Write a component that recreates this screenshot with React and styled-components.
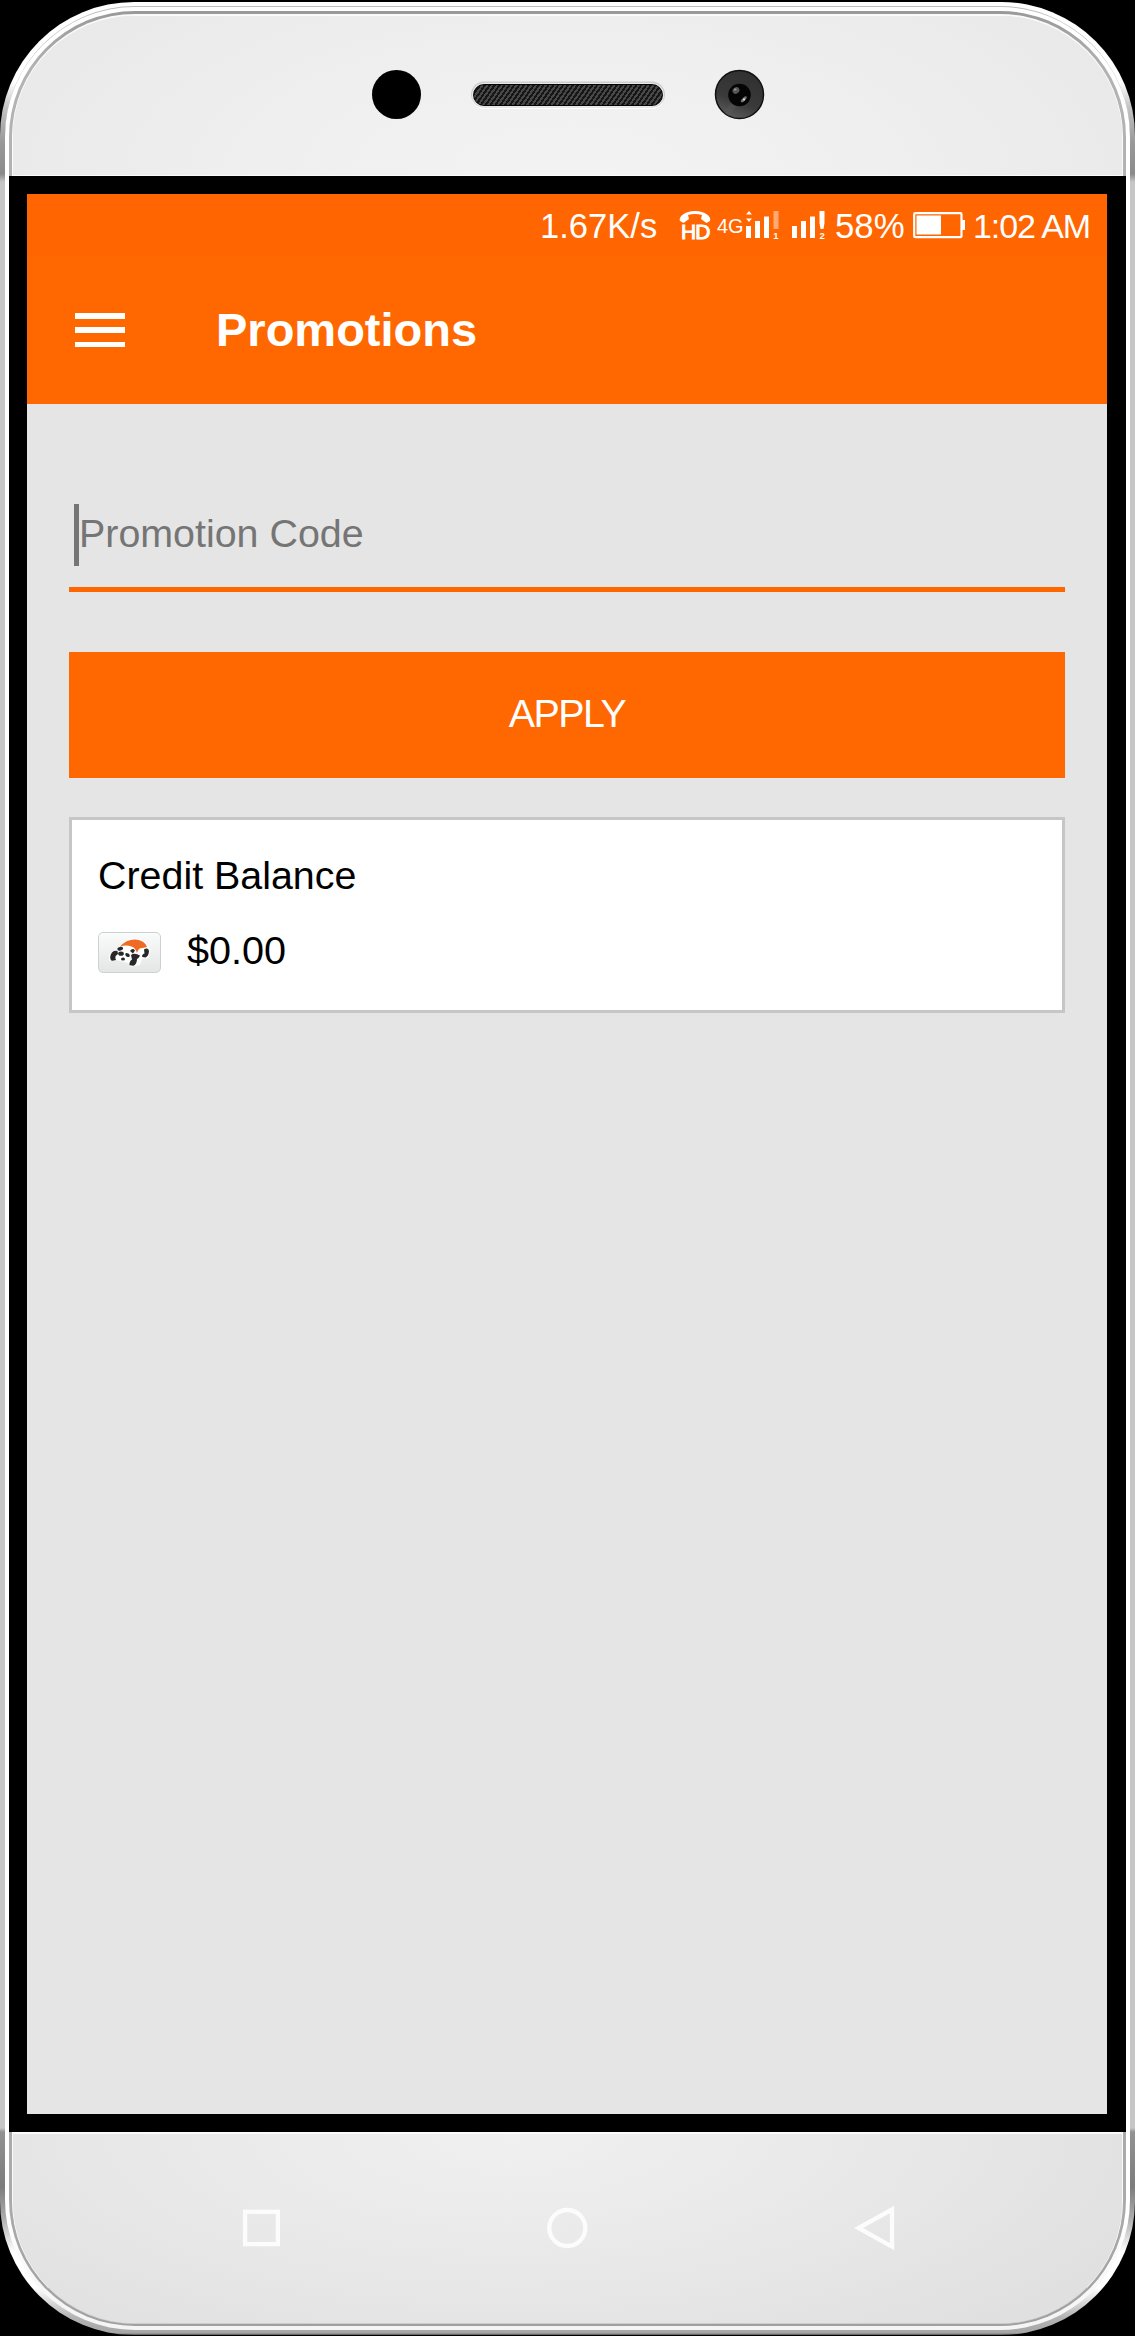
import React from "react";
import styled, { createGlobalStyle, css } from "styled-components";

const GlobalStyle = createGlobalStyle`
  *, *::before, *::after { box-sizing: border-box; }
  html, body { margin: 0; padding: 0; background: #000; }
  body { font-family: "Liberation Sans", Arial, sans-serif; }
  svg { display: block; flex: none; overflow: visible; }
`;

const Stage = styled.main`
  width: 1135px;
  height: 2336px;
  padding: 2px 0 1px;
  background: #000;
  overflow: hidden;
`;

const Rim = styled.div`
  height: 2333px;
  padding: 4px 5px 5px;
  border-radius: 134px;
  background: linear-gradient(
    180deg,
    #fff 0,
    #fff 80px,
    #c4c4c4 105px,
    #999 140px,
    #8a8a8a 172px,
    #c6c6c6 180px,
    #c6c6c6 2126px,
    #929292 2130px,
    #7c7c7c 2185px,
    #aaa 2215px,
    #fff 2250px,
    #fff 2285px,
    #b4b4b4 2315px,
    #a6a6a6 2331px,
    #555 2333px
  );
`;

const Edge = styled.div`
  height: 100%;
  padding: 4px 4px 4px;
  border-top: 1px solid #bdbdbd;
  border-radius: 130px;
  background: linear-gradient(180deg, #fff 0, #fff 2200px, #f4f4f4 100%);
`;

const Groove = styled.div`
  height: 100%;
  padding: 3px 3px 2px;
  border-radius: 126px;
  background: linear-gradient(180deg, #999 0, #b3b3b3 60px, #aaa 2200px, #a0a0a0 100%);
`;

const Face = styled.div`
  height: 100%;
  display: flex;
  flex-direction: column;
  border-radius: 123px;
  border: 1px solid #fafafa;
  border-top-width: 2px;
  border-bottom: 1px solid #ccc;
  background: #e8e8e8;
`;

const TopBezel = styled.header`
  height: 160px;
  flex: none;
  display: flex;
  align-items: center;
  gap: 52px;
  padding: 0 0 2px 358.5px;
  border-bottom: 1px solid #fafafa;
  border-radius: 121px 121px 0 0;
  background: radial-gradient(ellipse 620px 260px at 50% 100%, #f3f3f3 0, #efefef 50%, #e9e9e9 100%);
`;

const Sensor = styled.div`
  width: 49px;
  height: 49px;
  border-radius: 50%;
  background: #000;
`;

const Speaker = styled.div`
  width: 190px;
  height: 22px;
  border-radius: 11px;
  border: 1.5px solid #050505;
  background: repeating-linear-gradient(125deg, #161616 0, #161616 2px, #484848 2px, #484848 4px);
  box-shadow: 0 0 0 1px #e9e9e9, 0 -0.5px 0 2px #cdcdcd, 0 2px 0 1px #fff;
`;

const Screen = styled.section`
  height: 1956px;
  flex: none;
  margin: 0 -4px;
  padding: 18px 19px 18px 18px;
  background: #000;
`;

const AppPage = styled.div`
  height: 100%;
  display: flex;
  flex-direction: column;
  background: #e5e5e5;
`;

const StatusBar = styled.div`
  height: 62px;
  flex: none;
  display: flex;
  align-items: flex-start;
  padding-left: 513px;
  background: #ff6500;
  color: #fff;
`;

const StatusText = styled.span`
  width: ${(p) => p.$width}px;
  flex: none;
  padding-top: ${(p) => p.$top || 12}px;
  font-size: ${(p) => p.$size || 34}px;
  line-height: 40px;
  letter-spacing: ${(p) => p.$spacing || 0}px;
  white-space: nowrap;
`;

const StatusIcons = styled.svg`
  margin-right: ${(p) => p.$gap}px;
`;

const AppBar = styled.div`
  height: 148px;
  flex: none;
  display: flex;
  align-items: flex-start;
  padding: 57px 0 0 48px;
  gap: 91px;
  background: #ff6800;
`;

const MenuButton = styled.button`
  width: 50px;
  height: 34px;
  padding: 0;
  margin: 0;
  border: 0;
  background: none;
  display: flex;
  flex-direction: column;
  justify-content: space-between;
  &::before, &::after { content: ""; height: 5.5px; background: #fff; }
`;

const MenuLine = styled.span`
  height: 5.5px;
  background: #fff;
`;

const Title = styled.h1`
  margin: -11px 0 0;
  font-size: 47px;
  font-weight: 700;
  line-height: 56px;
  color: #fff;
`;

const Content = styled.div`
  display: flex;
  flex-direction: column;
  padding: 100px 42px 0;
`;

const Field = styled.label`
  height: 88px;
  display: flex;
  align-items: flex-start;
  padding-left: 5px;
  border-bottom: 5px solid #ff6600;
`;

const Caret = styled.i`
  width: 5px;
  height: 62px;
  flex: none;
  background: #757575;
`;

const text = css`
  font-size: ${(p) => p.$size || 39.4}px;
  line-height: 48px;
  letter-spacing: ${(p) => p.$spacing || 0}px;
  white-space: nowrap;
`;

const Placeholder = styled.span`
  ${text}
  padding-top: 5px;
  color: #757575;
`;

const ApplyButton = styled.button`
  ${text}
  height: 126px;
  margin: 60px 0 39px;
  padding: 0 0 4px;
  border: 0;
  font-family: inherit;
  color: #fff;
  background: #ff6700;
`;

const Card = styled.section`
  height: 196px;
  padding: 31px 26px 0;
  border: 3px solid #c6c6c6;
  background: #fff;
  color: #000;
`;

const CardTitle = styled.div`
  ${text}
`;

const Balance = styled.div`
  display: flex;
  align-items: center;
  gap: 26px;
  margin-top: 27px;
`;

const Amount = styled.span`
  ${text}
  padding-bottom: 5px;
`;

const Badge = styled.div`
  width: 63px;
  height: 41px;
  border-radius: 5px;
  border: 1px solid #cfd1d1;
  background: linear-gradient(180deg, #fafbfb, #e4e6e5);
`;

const BottomBezel = styled.footer`
  flex: 1;
  display: flex;
  align-items: flex-start;
  padding: 70px 0 0 230px;
  border-top: 2px solid #fbfbfb;
  border-radius: 0 0 121px 121px;
  background: radial-gradient(ellipse 700px 260px at 45% 0, #f0f0f0 0, #e8e8e8 55%, #e0e0e0 100%);
`;

const NavIcon = styled.svg`
  margin-right: ${(p) => p.$gap || 0}px;
  fill: none;
  stroke: #fcfcfc;
  stroke-width: 4.3;
`;

const Camera = () => (
  <svg width="49" height="49" viewBox="0 0 49 49">
    <defs>
      <linearGradient id="lens" x1="0.2" y1="1" x2="0.6" y2="0">
        <stop offset="0" stopColor="#606060" />
        <stop offset="0.4" stopColor="#3a3a3a" />
        <stop offset="1" stopColor="#303030" />
      </linearGradient>
    </defs>
    <circle cx="24.5" cy="24.5" r="24" fill="url(#lens)" stroke="#111" strokeWidth="1.5" />
    <path d="M16 33 8.500 42A24 24 0 0 0 14 46L22 36Z" fill="#5a5a5a" opacity=".4" />
    <circle cx="24.5" cy="25" r="11.3" fill="#050505" />
    <ellipse cx="21" cy="20.5" rx="3.7" ry="3" fill="#555" transform="rotate(-35 21 20.5)" />
    <ellipse cx="20.3" cy="19.5" rx="1.4" ry="1" fill="#999" />
    <ellipse cx="28.8" cy="29.3" rx="3.8" ry="1.6" fill="#777" transform="rotate(-45 28.8 29.3)" />
    <circle cx="29" cy="29.5" r="1" fill="#eee" />
  </svg>
);

const HdCall = () => (
  <StatusIcons $gap={6} width="32" height="54" viewBox="0 0 32 54" fill="#fff">
    <path d="M1 27C-1 23 6 17 16 17S33 23 31 27L27.5 29 22 25 23 21Q16 19 9 21L10 25 4.5 29Z" />
    <text
      x="2"
      y="44.5"
      fontSize="21"
      stroke="#fff"
      strokeWidth="1"
      fontFamily="Liberation Sans"
      letterSpacing="-1"
    >
      HD
    </text>
  </StatusIcons>
);

const SignalOne = () => (
  <StatusIcons $gap={12} width="34" height="50" viewBox="0 0 34 50" fill="#fff">
    <path d="M0 20.5 3 17 6 20.5ZM0 24.5H6L3 28ZM0 32H5V44H0ZM9 27H14V44H9ZM18 22.5H23V44H18Z" />
    <path d="M27.5 17H32.5V35H27.5Z" opacity=".45" />
    <text x="27.3" y="44.5" fontSize="9.500" fontWeight="700" fontFamily="Liberation Sans">1</text>
  </StatusIcons>
);

const SignalTwo = () => (
  <StatusIcons $gap={10} width="33" height="50" viewBox="0 0 33 50" fill="#fff">
    <path d="M0 32H5V44H0ZM9 27H14V44H9ZM18 22.5H23V44H18ZM27.5 17H32.5V29L31.5 35H28.5L27.5 29Z" />
    <text x="27.5" y="44.5" fontSize="9.500" fontWeight="700" fontFamily="Liberation Sans">2</text>
  </StatusIcons>
);

const Battery = () => (
  <StatusIcons $gap={7} width="53" height="50" viewBox="0 0 53 50" fill="#fff">
    <rect x="1.2" y="19.2" width="47.3" height="24" rx="1" fill="none" stroke="#fff" strokeWidth="2.2" />
    <path d="M3.500 21.5H28V40.5H3.500ZM49 26H52V36H49Z" />
  </StatusIcons>
);

const PandaCar = () => (
  <svg width="61" height="39" viewBox="1 1 61 39">
    <path
      d="M20 16Q28 6 38 6.5 47 7 50.5 14L52.5 17 50.5 26 44 27 42 33 32 35 30 31 18 28 11 29 11 23Z"
      fill="#fff"
      opacity=".9"
    />
    <path d="M22 14.8Q28 7.3 37.5 7.5 46.5 8 49 15L44.5 16Q40.5 15.5 39 21 37.5 16 34 14.8 28 12.2 22 14.8Z" fill="#ef6a22" />
    <g fill="#292727">
      <path d="M19.5 19Q14 18 12.3 24 11.8 28.5 14.5 28.8L18 28Q16 24 20 22Z" />
      <ellipse cx="22.2" cy="16.8" rx="2.9" ry="1.8" transform="rotate(-15 22.2 16.8)" />
      <ellipse cx="23" cy="21.7" rx="2.8" ry="2.1" />
      <ellipse cx="29.5" cy="23" rx="2.5" ry="1.7" transform="rotate(35 29.5 23)" />
      <path d="M32 19Q34.5 15.5 37 18.5L35 21.5Z" />
      <ellipse cx="25" cy="27" rx="2" ry="1.5" />
      <path d="M33 23Q36.5 20.5 42 23.5 41 26 39 27 39 32 35.5 33.8L31.5 33.2Q31 29.5 34 27.5Z" />
      <path d="M46 17.5Q50 15 51 19 50.8 24 47.5 25.5L44.2 25Q43.5 22.5 46.5 21.5Z" />
    </g>
  </svg>
);

export default function App() {
  return (
    <>
      <GlobalStyle />
      <Stage>
        <Rim>
          <Edge>
            <Groove>
              <Face>
                <TopBezel>
                  <Sensor />
                  <Speaker />
                  <Camera />
                </TopBezel>
                <Screen>
                  <AppPage>
                    <StatusBar>
                      <StatusText $width={139} $size={34.6}>1.67K/s</StatusText>
                      <HdCall />
                      <StatusText $width={29} $size={20}>4G</StatusText>
                      <SignalOne />
                      <SignalTwo />
                      <StatusText $width={78} $size={34.8}>58%</StatusText>
                      <Battery />
                      <StatusText $width={124} $size={34} $spacing={-1.1}>1:02 AM</StatusText>
                    </StatusBar>
                    <AppBar>
                      <MenuButton aria-label="Menu"><MenuLine /></MenuButton>
                      <Title>Promotions</Title>
                    </AppBar>
                    <Content>
                      <Field>
                        <Caret />
                        <Placeholder>Promotion Code</Placeholder>
                      </Field>
                      <ApplyButton $spacing={-1.5}>APPLY</ApplyButton>
                      <Card>
                        <CardTitle $size={39.4}>Credit Balance</CardTitle>
                        <Balance>
                          <Badge><PandaCar /></Badge>
                          <Amount $size={39.6}>$0.00</Amount>
                        </Balance>
                      </Card>
                    </Content>
                  </AppPage>
                </Screen>
                <BottomBezel>
                  <NavIcon $gap={267} width="37" height="48" viewBox="0 0 37 48">
                    <rect x="2.1" y="7.8" width="32.8" height="32.3" />
                  </NavIcon>
                  <NavIcon $gap={265} width="41" height="48" viewBox="0 0 41 48">
                    <circle cx="20.3" cy="24" r="18" />
                  </NavIcon>
                  <NavIcon width="42" height="48" viewBox="0 0 42 48">
                    <path d="M39 5.5V42.7L5.5 24Z" />
                  </NavIcon>
                </BottomBezel>
              </Face>
            </Groove>
          </Edge>
        </Rim>
      </Stage>
    </>
  );
}
